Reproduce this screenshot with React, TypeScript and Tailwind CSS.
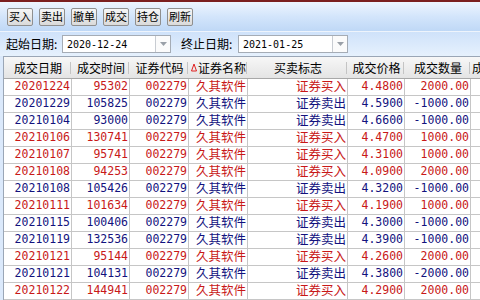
import React from 'react';

type Row = {
  date: string;
  time: string;
  code: string;
  name: string;
  flag: string;
  price: string;
  qty: string;
  buy: boolean;
};

const rows: Row[] = [
  ['20201224', '95302', '证券买入', '4.4800', '2000.00'],
  ['20201229', '105825', '证券卖出', '4.5900', '-1000.00'],
  ['20210104', '93000', '证券卖出', '4.6600', '-1000.00'],
  ['20210106', '130741', '证券买入', '4.4700', '1000.00'],
  ['20210107', '95741', '证券买入', '4.3100', '1000.00'],
  ['20210108', '94253', '证券买入', '4.0900', '2000.00'],
  ['20210108', '105426', '证券卖出', '4.3200', '-1000.00'],
  ['20210111', '101634', '证券买入', '4.1900', '1000.00'],
  ['20210115', '100406', '证券卖出', '4.3000', '-1000.00'],
  ['20210119', '132536', '证券卖出', '4.3900', '-1000.00'],
  ['20210121', '95144', '证券买入', '4.2600', '2000.00'],
  ['20210121', '104131', '证券卖出', '4.3800', '-2000.00'],
  ['20210122', '144941', '证券买入', '4.2900', '2000.00'],
].map(([date, time, flag, price, qty]) => ({
  date,
  time,
  code: '002279',
  name: '久其软件',
  flag,
  price,
  qty,
  buy: flag === '证券买入',
}));

const buttons = ['买入', '卖出', '撤单', '成交', '持仓', '刷新'];

// text cells use the CJK-friendly stack, number cells a monospace one
const cols = [
  { title: '成交日期', w: 'w-[68px]', num: true },
  { title: '成交时间', w: 'w-[58px]', num: true },
  { title: '证券代码', w: 'w-[59px]', num: true },
  { title: '证券名称', w: 'w-[59px]', sort: true },
  { title: '买卖标志', w: 'w-[100px]' },
  { title: '成交价格', w: 'w-[57px]', num: true },
  { title: '成交数量', w: 'w-[66px]', num: true },
];

function DateBox({ value, width }: { value: string; width: string }) {
  return (
    <div className={`flex h-[18px] ${width} border border-[#a5acb5] bg-white`}>
      <div className="flex flex-1 items-center pl-[4px] font-['DejaVu_Sans_Mono',monospace] text-[10px] text-black">{value}</div>
      <div className="flex w-[15px] items-center justify-center border-l border-[#c8ccd2] bg-[#fbfbfb]">
        <svg width="7" height="4" viewBox="0 0 7 4">
          <path d="M0 0h7L3.5 4z" fill="#9aa0a8" />
        </svg>
      </div>
    </div>
  );
}

export default function App() {
  return (
    <div className="flex h-[300px] w-[480px] flex-col overflow-hidden bg-[#dbe9fb] font-['Noto_Sans_CJK_SC',sans-serif]">
      <div className="h-[2px] bg-[#7b1f1f]" />
      {/* toolbar */}
      <div className="flex h-[31px] items-center gap-[6px] border-b border-[#eef4fc] bg-gradient-to-b from-[#eef5fe] via-[#d3e5fb] to-[#bfd8f6] pl-[7px]">
        {buttons.map((b) => (
          <div
            key={b}
            className="flex h-[18px] w-[26px] items-center justify-center rounded-[2px] border border-[#8f8f8f] bg-gradient-to-b from-[#f6f6f6] to-[#dadada] text-[11px] leading-none text-black"
          >
            {b}
          </div>
        ))}
      </div>
      {/* date filters */}
      <div className="flex h-[24px] items-center bg-gradient-to-b from-[#cfe2fa] to-[#e6f1fd] pl-[6px]">
        <span className="w-[56px] text-[12px] text-black">起始日期:</span>
        <DateBox value="2020-12-24" width="w-[109px]" />
        <span className="ml-[10px] w-[57px] text-[12px] text-black">终止日期:</span>
        <DateBox value="2021-01-25" width="w-[110px]" />
      </div>
      {/* grid */}
      <div className="ml-[3px] flex flex-1 flex-col border-l border-t border-[#9aa6b6] bg-white">
        <div className="flex h-[22px] shrink-0 border-b border-[#a8a8a8] bg-gradient-to-b from-[#f7f7f7] to-[#e4e4e4]">
          {cols.map((c) => (
            <div key={c.title} className={`relative flex ${c.w} shrink-0 items-center justify-center text-[12px] text-black`}>
              {c.sort && (
                <svg width="6" height="9" viewBox="0 0 6 9" className="mr-[1px]">
                  <path d="M3 1L5.5 8H0.5z" fill="none" stroke="#e02020" strokeWidth="1" />
                </svg>
              )}
              {c.title}
              <div className="absolute right-[1px] top-[5px] h-[12px] w-[1px] bg-[#c4c4c4]" />
            </div>
          ))}
          <div className="flex flex-1 items-center pl-[1px] text-[12px] text-black">成</div>
        </div>
        {rows.map((r, i) => (
          <div
            key={i}
            className={`flex h-[17px] shrink-0 leading-none ${r.buy ? 'text-[#c81818]' : 'text-[#12127e]'}`}
          >
            {[r.date, r.time, r.code, r.name, r.flag, r.price, r.qty].map((v, j) => (
              <div
                key={j}
                className={`flex ${cols[j].w} shrink-0 items-center justify-end border-b border-r border-[#c6c6c6] pr-[1px] ${
                  cols[j].num
                    ? "font-['DejaVu_Sans_Mono',monospace] text-[11.5px]"
                    : "font-['Liberation_Sans','Noto_Sans_CJK_SC',sans-serif] text-[12.5px]"
                }`}
              >
                {v}
              </div>
            ))}
            <div className="flex-1 border-b border-[#c6c6c6]" />
          </div>
        ))}
      </div>
    </div>
  );
}
